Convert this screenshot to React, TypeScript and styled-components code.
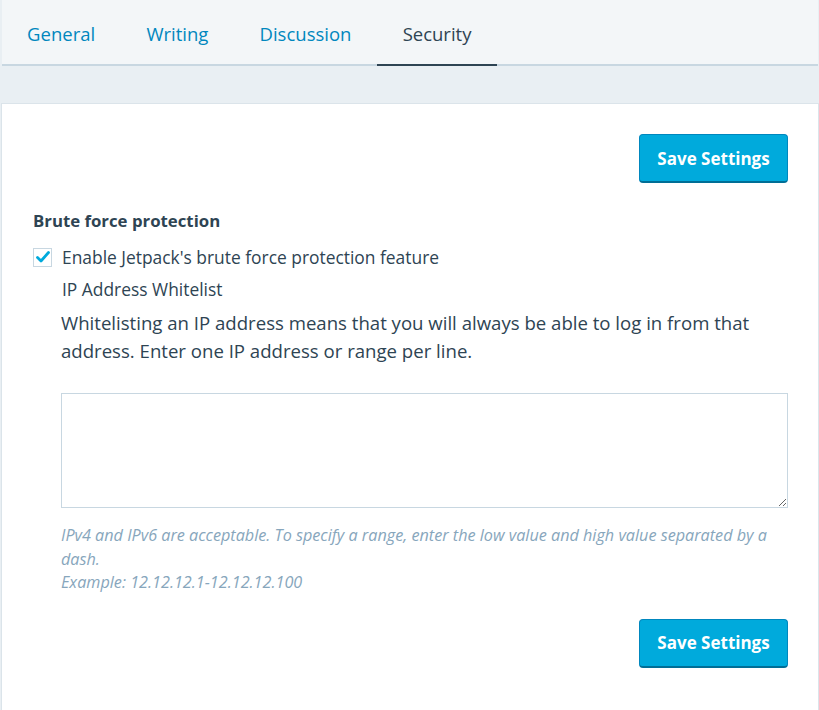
import styled, { createGlobalStyle } from "styled-components";

const GlobalStyle = createGlobalStyle`
	body {
		margin: 0;
		background: #e9eff3;
		font-family: "Open Sans", "Liberation Sans", sans-serif;
		color: #2e4453;
	}
`;

const Page = styled.div`
	width: 819px;
	min-height: 710px;
	display: flex;
	flex-direction: column;
`;

const TabBar = styled.nav`
	display: flex;
	margin: 0 1px 0 1.5px;
	height: 64px;
	background: #f3f6f8;
	border-bottom: 2px solid #c8d7e1;
`;

const Tab = styled.a<{ $active?: boolean }>`
	display: flex;
	align-items: center;
	padding: 3px 25.6px 0;
	margin-bottom: -2px;
	font-size: 18.5px;
	text-decoration: none;
	color: ${(p) => (p.$active ? "#2e4453" : "#0087be")};
	border-bottom: 2px solid ${(p) => (p.$active ? "#2e4453" : "transparent")};
	cursor: pointer;
`;

const Spacer = styled.div`
	height: 37px;
`;

const Card = styled.section`
	flex: 1;
	margin: 0 0 0 1px;
	background: #fff;
	border: 1px solid #dbe4ea;
	border-bottom: none;
	padding: 30px 30px 40px 30px;
	display: flex;
	flex-direction: column;
`;

const ButtonRow = styled.div`
	display: flex;
	justify-content: flex-end;
`;

const SaveButton = styled.button`
	width: 149px;
	height: 49px;
	border-radius: 4px;
	border: 1px solid #0087be;
	border-bottom-width: 2px;
	border-bottom-color: #006e96;
	background: #00aadc;
	color: #fff;
	font-family: inherit;
	font-size: 17px;
	font-weight: 700;
	cursor: pointer;
`;

const SectionTitle = styled.h3`
	margin: 27px 0 0 1px;
	font-size: 16.8px;
	font-weight: 700;
	line-height: 22px;
`;

const CheckRow = styled.label`
	display: flex;
	align-items: center;
	gap: 10px;
	margin: 14px 0 0 1px;
	font-size: 17.4px;
	line-height: 22px;
`;

const CheckBox = styled.span`
	width: 19px;
	height: 19px;
	box-sizing: border-box;
	border: 1px solid #c8d7e1;
	display: flex;
	align-items: center;
	justify-content: center;
	background: #fff;
`;

const Indented = styled.div`
	padding-left: 29px;
	display: flex;
	flex-direction: column;
`;

const FieldLabel = styled.div`
	margin: 10px 0 0 1px;
	font-size: 17.4px;
	line-height: 22px;
`;

const Description = styled.p`
	margin: 9px 0 0;
	font-size: 18.6px;
	line-height: 28px;
`;

const WhitelistArea = styled.textarea`
	margin-top: 28px;
	height: 115px;
	box-sizing: border-box;
	border: 1px solid #c8d7e1;
	font-family: inherit;
	font-size: 16px;
	padding: 8px 12px;
	color: #2e4453;
	outline: none;
	resize: vertical;
`;

const Help = styled.p`
	margin: 16px 0 0;
	font-size: 16.2px;
	line-height: 23.5px;
	font-style: italic;
	color: #87a6bc;
`;

const BottomRow = styled(ButtonRow)`
	margin-top: 24px;
`;

const tabs = ["General", "Writing", "Discussion", "Security"];

export default function App(): JSX.Element {
	return (
		<Page>
			<GlobalStyle />
			<TabBar>
				{tabs.map((t) => (
					<Tab key={t} $active={t === "Security"}>
						{t}
					</Tab>
				))}
			</TabBar>
			<Spacer />
			<Card>
				<ButtonRow>
					<SaveButton>Save Settings</SaveButton>
				</ButtonRow>
				<SectionTitle>Brute force protection</SectionTitle>
				<CheckRow>
					<CheckBox>
						<svg width="14" height="12" viewBox="0 0 14 12">
							<path
								d="M1.5 6.5 L5 10 L12.5 1.5"
								fill="none"
								stroke="#00aadc"
								strokeWidth="2.8"
								strokeLinecap="round"
								strokeLinejoin="round"
							/>
						</svg>
					</CheckBox>
					Enable Jetpack's brute force protection feature
				</CheckRow>
				<Indented>
					<FieldLabel>IP Address Whitelist</FieldLabel>
					<Description>
						Whitelisting an IP address means that you will always be
						able to log in from that address. Enter one IP address or
						range per line.
					</Description>
					<WhitelistArea />
					<Help>
						IPv4 and IPv6 are acceptable. To specify a range, enter the
						low value and high value separated by a dash.
						<br />
						Example: 12.12.12.1-12.12.12.100
					</Help>
				</Indented>
				<BottomRow>
					<SaveButton>Save Settings</SaveButton>
				</BottomRow>
			</Card>
		</Page>
	);
}
